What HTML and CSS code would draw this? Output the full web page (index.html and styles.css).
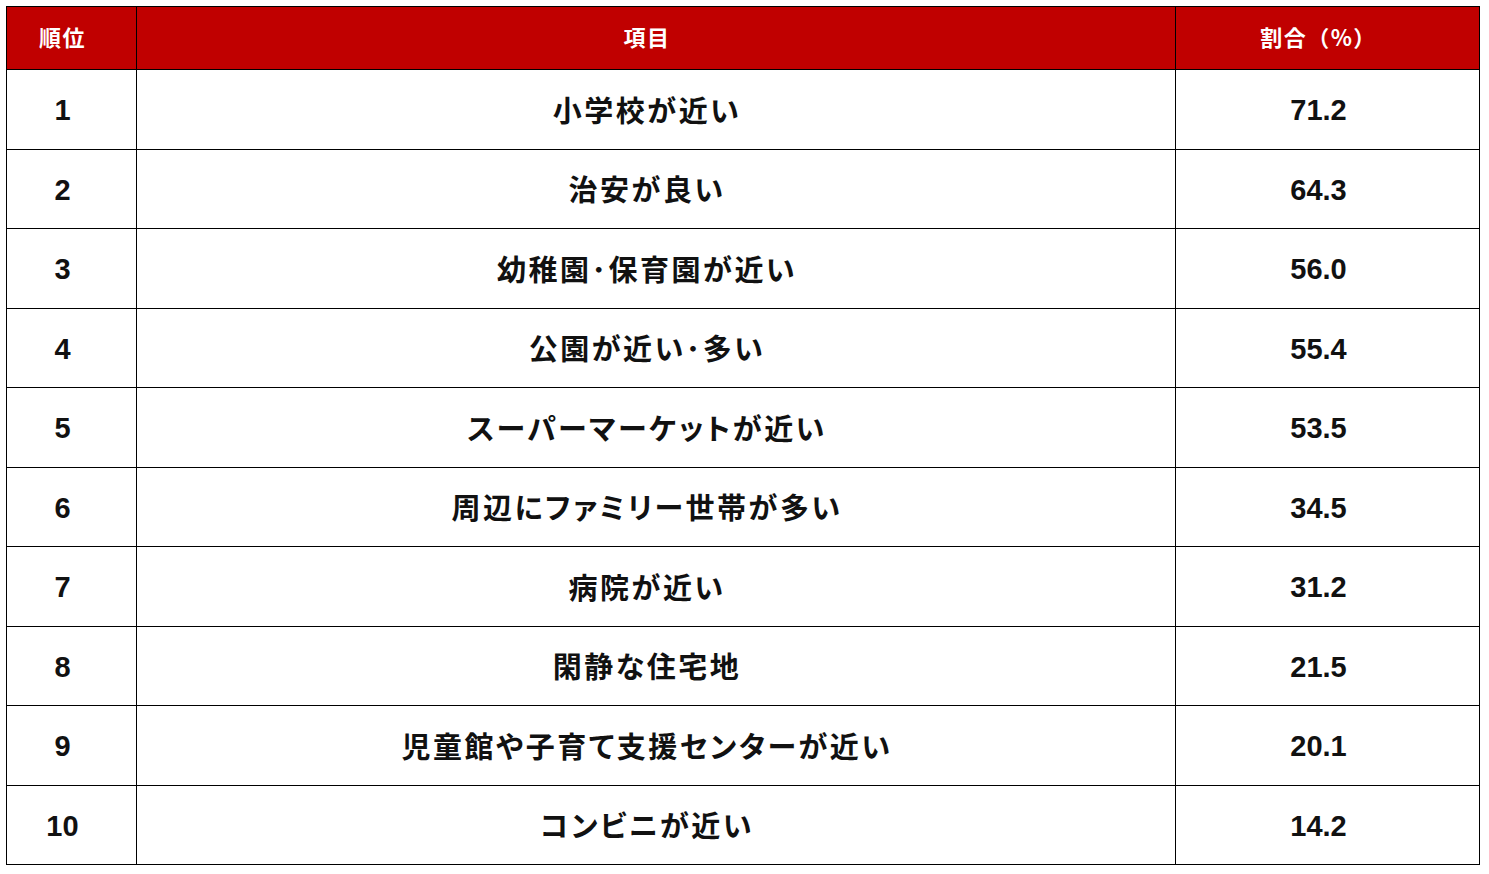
FILE: index.html
```html
<!DOCTYPE html>
<html lang="ja">
<head>
<meta charset="utf-8">
<title>ランキング</title>
<link rel="stylesheet" href="styles.css">
</head>
<body>
<table class="rank-table">
  <colgroup>
    <col class="col-rank">
    <col class="col-item">
    <col class="col-rate">
  </colgroup>
  <thead>
    <tr class="head-row">
      <th>順位</th>
      <th>項目</th>
      <th>割合（%）</th>
    </tr>
  </thead>
  <tbody>
    <tr><td class="num">1</td><td class="item">小学校が近い</td><td class="num">71.2</td></tr>
    <tr><td class="num">2</td><td class="item">治安が良い</td><td class="num">64.3</td></tr>
    <tr><td class="num">3</td><td class="item">幼稚園･保育園が近い</td><td class="num">56.0</td></tr>
    <tr><td class="num">4</td><td class="item">公園が近い･多い</td><td class="num">55.4</td></tr>
    <tr><td class="num">5</td><td class="item">スーパーマーケットが近い</td><td class="num">53.5</td></tr>
    <tr><td class="num">6</td><td class="item">周辺にファミリー世帯が多い</td><td class="num">34.5</td></tr>
    <tr><td class="num">7</td><td class="item">病院が近い</td><td class="num">31.2</td></tr>
    <tr><td class="num">8</td><td class="item">閑静な住宅地</td><td class="num">21.5</td></tr>
    <tr><td class="num">9</td><td class="item">児童館や子育て支援センターが近い</td><td class="num">20.1</td></tr>
    <tr><td class="num">10</td><td class="item">コンビニが近い</td><td class="num">14.2</td></tr>
  </tbody>
</table>
</body>
</html>
```

FILE: styles.css
```css
html, body {
  margin: 0;
  padding: 0;
  background: #ffffff;
}

body {
  padding: 6px 0 0 6px;
  font-family: "Liberation Sans", "Noto Sans CJK JP", sans-serif;
  color: #000000;
}

.rank-table {
  border-collapse: collapse;
  table-layout: fixed;
  width: 1473px;
}

.col-rank { width: 130px; }
.col-item { width: 1039px; }
.col-rate { width: 304px; }

.rank-table th,
.rank-table td {
  border: 1px solid #000000;
  text-align: center;
  vertical-align: middle;
  padding: 0 18px 0 0;
}

.head-row th {
  height: 63px;
  padding-bottom: 5px;
  box-sizing: border-box;
  background: #c00000;
  color: #ffffff;
  font-family: "Noto Sans CJK JP", sans-serif;
  font-weight: 700;
  font-size: 22px;
  letter-spacing: 1.5px;
}

.rank-table tbody td {
  height: 75.5px;
}

.rank-table td.num {
  padding-top: 3px;
  font-family: "Liberation Sans", sans-serif;
  font-weight: 700;
  font-size: 29px;
  color: #111111;
}

.rank-table td.item {
  padding-top: 1px;
  padding-bottom: 2px;
  font-family: "Noto Sans CJK JP", sans-serif;
  font-weight: 700;
  font-size: 29px;
  letter-spacing: 2.5px;
  font-feature-settings: "palt" 1;
  color: #111111;
}
```
